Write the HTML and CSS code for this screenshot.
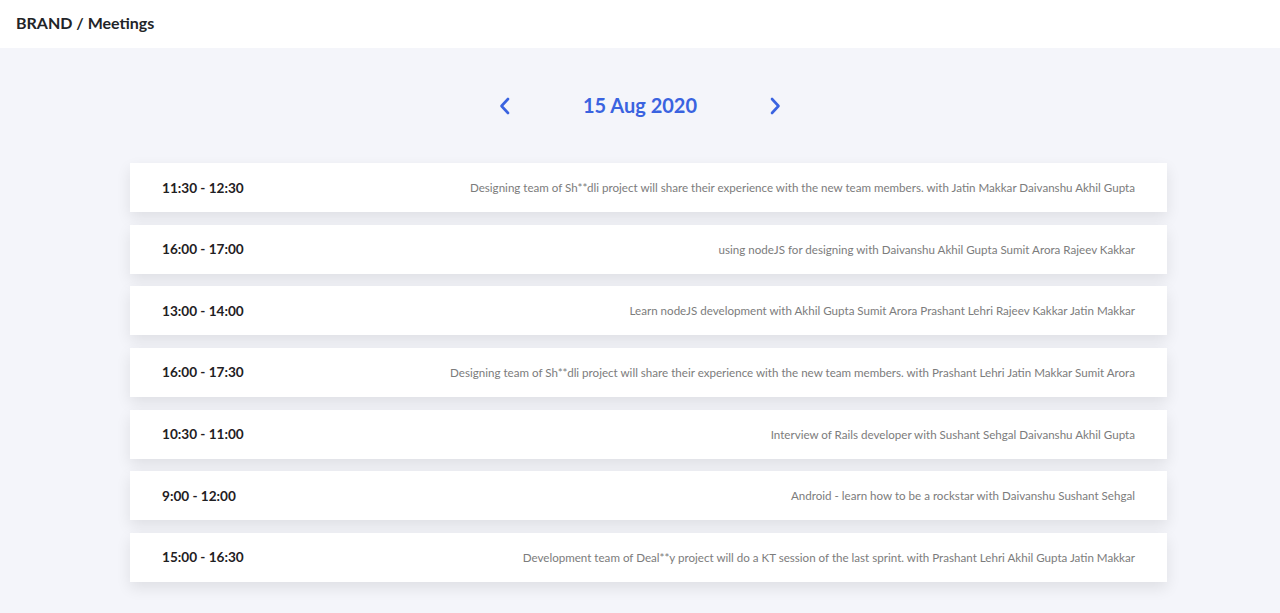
FILE: index.html
```html
<!DOCTYPE html>
<html>
<head>
<meta charset="utf-8">
<link rel="stylesheet" href="styles.css">
</head>
<body>
<header class="topbar"><span class="brand">BRAND / Meetings</span></header>
<main class="main">
  <div class="datenav">
    <button class="nav-btn" aria-label="Previous">
      <svg width="14" height="20" viewBox="0 0 14 20"><path d="M10 3 L3.5 10 L10 17" fill="none" stroke="#3a63e0" stroke-width="2.6" stroke-linecap="round" stroke-linejoin="round"/></svg>
    </button>
    <div class="date">15 Aug 2020</div>
    <button class="nav-btn" aria-label="Next">
      <svg width="14" height="20" viewBox="0 0 14 20"><path d="M4 3 L10.5 10 L4 17" fill="none" stroke="#3a63e0" stroke-width="2.6" stroke-linecap="round" stroke-linejoin="round"/></svg>
    </button>
  </div>
  <ul class="list">
    <li class="card"><span class="time">11:30 - 12:30</span><span class="desc">Designing team of Sh**dli project will share their experience with the new team members. with Jatin Makkar Daivanshu Akhil Gupta</span></li>
    <li class="card"><span class="time">16:00 - 17:00</span><span class="desc">using nodeJS for designing with Daivanshu Akhil Gupta Sumit Arora Rajeev Kakkar</span></li>
    <li class="card"><span class="time">13:00 - 14:00</span><span class="desc">Learn nodeJS development with Akhil Gupta Sumit Arora Prashant Lehri Rajeev Kakkar Jatin Makkar</span></li>
    <li class="card"><span class="time">16:00 - 17:30</span><span class="desc">Designing team of Sh**dli project will share their experience with the new team members. with Prashant Lehri Jatin Makkar Sumit Arora</span></li>
    <li class="card"><span class="time">10:30 - 11:00</span><span class="desc">Interview of Rails developer with Sushant Sehgal Daivanshu Akhil Gupta</span></li>
    <li class="card"><span class="time">9:00 - 12:00</span><span class="desc">Android - learn how to be a rockstar with Daivanshu Sushant Sehgal</span></li>
    <li class="card"><span class="time">15:00 - 16:30</span><span class="desc">Development team of Deal**y project will do a KT session of the last sprint. with Prashant Lehri Akhil Gupta Jatin Makkar</span></li>
  </ul>
</main>
</body>
</html>
```
FILE: styles.css
```css
* { box-sizing: border-box; }
html, body { margin: 0; padding: 0; }
body {
  background: #f4f5fa;
  font-family: "Lato", "Noto Sans", sans-serif;
  color: #222;
  height: 613px;
  overflow: hidden;
}
.topbar {
  height: 48px;
  background: #fff;
  display: flex;
  align-items: center;
  padding: 0 16px;
}
.brand {
  font-size: 16px;
  font-weight: 700;
  color: #222428;
  margin-top: -3px;
}
.main {
  display: flex;
  flex-direction: column;
}
.datenav {
  display: flex;
  justify-content: center;
  align-items: center;
  height: 115px;
}
.nav-btn {
  background: none;
  border: 0;
  padding: 0;
  width: 14px;
  height: 20px;
  display: flex;
  cursor: pointer;
}
.date {
  width: 256px;
  text-align: center;
  font-size: 20px;
  font-weight: 700;
  color: #3a63e0;
  margin-top: -1px;
}
.list {
  list-style: none;
  margin: 0 0 0 130px;
  padding: 0;
  width: 1037px;
  display: flex;
  flex-direction: column;
  gap: 12.67px;
}
.card {
  height: 49px;
  background: #fff;
  display: flex;
  align-items: center;
  justify-content: space-between;
  padding: 0 32px;
  box-shadow: 0 6px 14px rgba(0, 0, 0, 0.09);
}
.time {
  font-size: 13.6px;
  font-weight: 700;
  color: #1f2023;
  white-space: nowrap;
}
.desc {
  font-size: 11.6px;
  color: #7c7c7c;
  text-align: right;
  white-space: nowrap;
}
```
